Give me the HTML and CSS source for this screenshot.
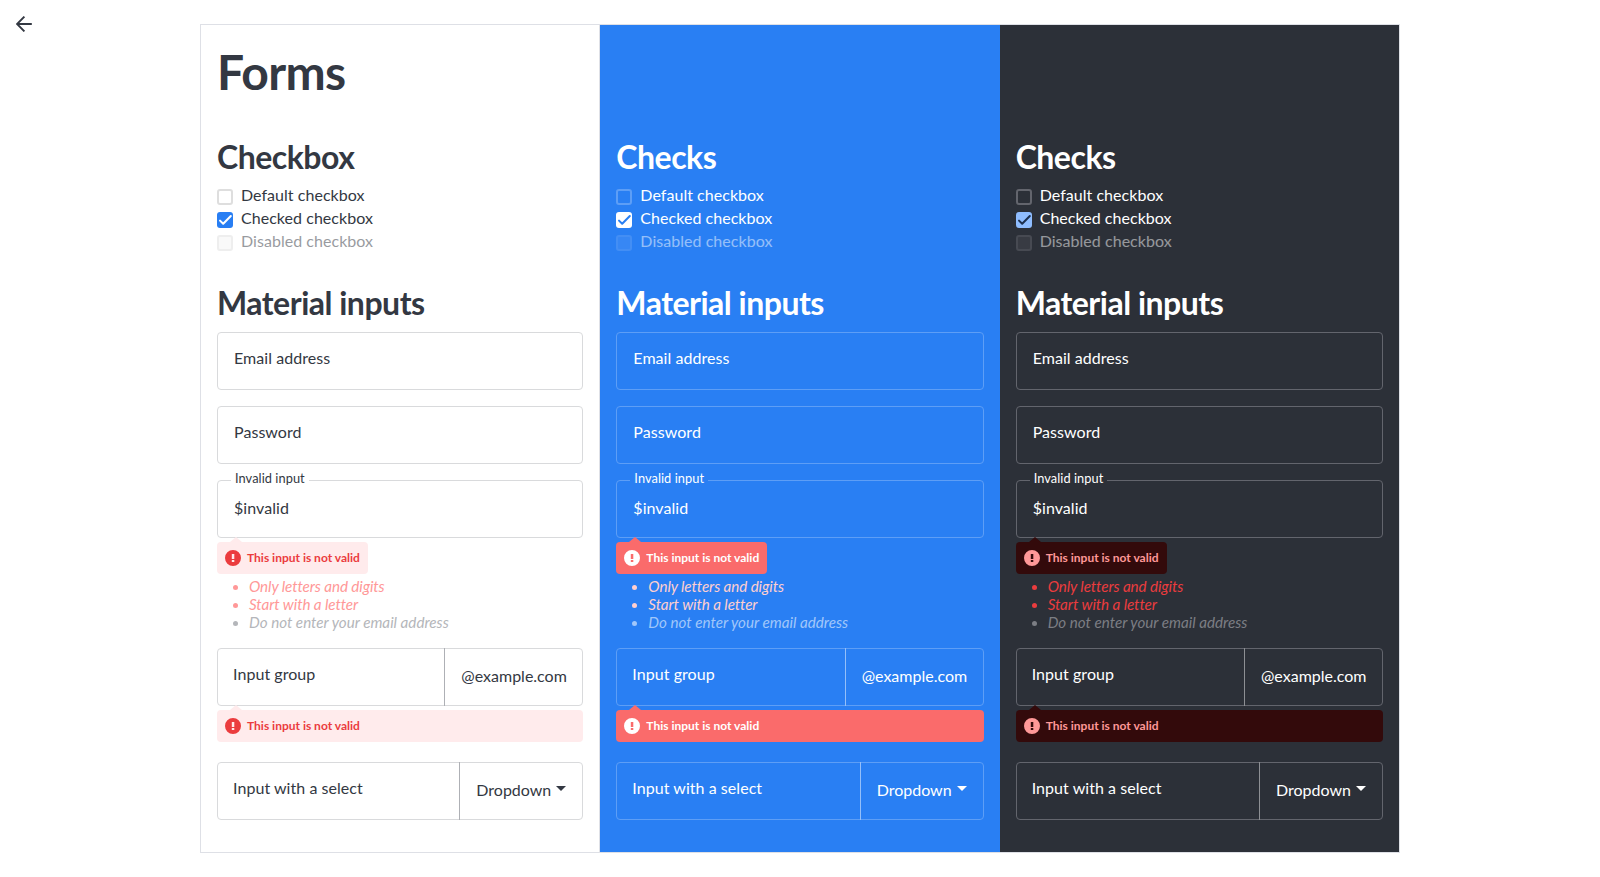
FILE: index.html
```html
<!DOCTYPE html>
<html lang="en">
<head>
<meta charset="utf-8">
<title>Forms</title>
<link rel="stylesheet" href="styles.css">
</head>
<body>
<svg class="defs" width="0" height="0" aria-hidden="true">
  <symbol id="tick" viewBox="0 0 16 16"><path d="M3 8.6 6.2 11.8 13.8 4" fill="none" stroke="currentColor" stroke-width="2" stroke-linecap="round" stroke-linejoin="round"/></symbol>
  <symbol id="alert" viewBox="0 0 16 16"><path fill-rule="evenodd" fill="currentColor" d="M8 0a8 8 0 1 0 0 16A8 8 0 0 0 8 0zM6.8 4h2.5v5H6.8zM6.8 10h2.5v2.1H6.8z"/></symbol>
</svg>
<a class="back" href="#" aria-label="Back">
  <svg width="16" height="16" viewBox="0 0 16 16"><path d="M15.8 8H1.2M8.4.6 1 8l7.4 7.4" fill="none" stroke="currentColor" stroke-width="1.9"/></svg>
</a>
<main class="board">
  <section class="col light">
    <h1>Forms</h1>
    <h2>Checkbox</h2>
    <div class="checks">
      <div class="check"><i class="box"></i><span>Default checkbox</span></div>
      <div class="check"><i class="box on"><svg width="16" height="16"><use href="#tick"/></svg></i><span>Checked checkbox</span></div>
      <div class="check off"><i class="box"></i><span>Disabled checkbox</span></div>
    </div>
    <h2>Material inputs</h2>
    <div class="form">
      <div class="field"><span class="label">Email address</span></div>
      <div class="field"><span class="label">Password</span></div>
      <div class="field filled"><span class="float">Invalid input</span><span class="value">$invalid</span></div>
      <div class="feedback short"><svg width="16" height="16"><use href="#alert"/></svg><span>This input is not valid</span></div>
      <ul class="rules"><li class="bad">Only letters and digits</li><li class="bad">Start with a letter</li><li>Do not enter your email address</li></ul>
      <div class="field group"><span class="label">Input group</span><span class="addon">@example.com</span></div>
      <div class="feedback"><svg width="16" height="16"><use href="#alert"/></svg><span>This input is not valid</span></div>
      <div class="field group"><span class="label">Input with a select</span><span class="addon select">Dropdown<i class="caret"></i></span></div>
    </div>
  </section>
  <section class="col blue">
    <h1></h1>
    <h2>Checks</h2>
    <div class="checks">
      <div class="check"><i class="box"></i><span>Default checkbox</span></div>
      <div class="check"><i class="box on"><svg width="16" height="16"><use href="#tick"/></svg></i><span>Checked checkbox</span></div>
      <div class="check off"><i class="box"></i><span>Disabled checkbox</span></div>
    </div>
    <h2>Material inputs</h2>
    <div class="form">
      <div class="field"><span class="label">Email address</span></div>
      <div class="field"><span class="label">Password</span></div>
      <div class="field filled"><span class="float">Invalid input</span><span class="value">$invalid</span></div>
      <div class="feedback short"><svg width="16" height="16"><use href="#alert"/></svg><span>This input is not valid</span></div>
      <ul class="rules"><li class="bad">Only letters and digits</li><li class="bad">Start with a letter</li><li>Do not enter your email address</li></ul>
      <div class="field group"><span class="label">Input group</span><span class="addon">@example.com</span></div>
      <div class="feedback"><svg width="16" height="16"><use href="#alert"/></svg><span>This input is not valid</span></div>
      <div class="field group"><span class="label">Input with a select</span><span class="addon select">Dropdown<i class="caret"></i></span></div>
    </div>
  </section>
  <section class="col dark">
    <h1></h1>
    <h2>Checks</h2>
    <div class="checks">
      <div class="check"><i class="box"></i><span>Default checkbox</span></div>
      <div class="check"><i class="box on"><svg width="16" height="16"><use href="#tick"/></svg></i><span>Checked checkbox</span></div>
      <div class="check off"><i class="box"></i><span>Disabled checkbox</span></div>
    </div>
    <h2>Material inputs</h2>
    <div class="form">
      <div class="field"><span class="label">Email address</span></div>
      <div class="field"><span class="label">Password</span></div>
      <div class="field filled"><span class="float">Invalid input</span><span class="value">$invalid</span></div>
      <div class="feedback short"><svg width="16" height="16"><use href="#alert"/></svg><span>This input is not valid</span></div>
      <ul class="rules"><li class="bad">Only letters and digits</li><li class="bad">Start with a letter</li><li>Do not enter your email address</li></ul>
      <div class="field group"><span class="label">Input group</span><span class="addon">@example.com</span></div>
      <div class="feedback"><svg width="16" height="16"><use href="#alert"/></svg><span>This input is not valid</span></div>
      <div class="field group"><span class="label">Input with a select</span><span class="addon select">Dropdown<i class="caret"></i></span></div>
    </div>
  </section>
</main>
</body>
</html>
```
FILE: styles.css
```css
* { box-sizing: border-box; }
body { margin: 0; background: #fff; color: #333842; font: 400 16px/24px Lato, sans-serif; }
.defs { position: absolute; }
.back { position: absolute; left: 16px; top: 16px; height: 16px; color: #333842; }
.back svg { display: block; }

.board { display: flex; width: 1200px; height: 829px; margin: 24px auto 0; border: 1px solid #dee0e6; }
.col { flex: 0 0 33.3333%; min-width: 0; padding: 18px 16px 0; background: var(--bg); color: var(--text); }
.light { --bg: #fff; --text: #333842; --line: #d9dadc; --sep: #aeb0b5; --box: #dedede; --on: #287ef3; --tick: #fff;
  --fbg: #ffebec; --fg: #eb3c3e; --bad: #ff9898; --hint: #b4b6ba; --offbg: #f4f4f4; border-right: 1px solid #dee0e6; }
.blue { --bg: #297ff3; --text: #fff; --line: #5d9ef6; --sep: #94bff9; --box: #5d9ef6; --on: #fff; --tick: #297ff3;
  --fbg: #fa6b6b; --fg: #fff; --bad: #ffcfcf; --hint: #a1c7fa; --offbg: #468ff5; }
.dark { --bg: #2c3038; --text: #fff; --line: #63656d; --sep: #8d8f94; --box: #63656d; --on: #8fbdff; --tick: #1c3050;
  --fbg: #330a0b; --fg: #ff9898; --bad: #eb3c3e; --hint: #7c7e84; --offbg: #45474e; }

h1 { height: 58px; margin: 0 0 37px; font-size: 48px; line-height: 58px; font-weight: 700; letter-spacing: -.65px; }
h2 { height: 38px; margin: 0; font-size: 32px; line-height: 38px; font-weight: 700; letter-spacing: -.5px; }

.checks { margin: 8px 0 31px; }
.check { display: flex; gap: 8px; height: 23px; line-height: 21px; letter-spacing: .04px; }
.box { width: 16px; height: 16px; margin-top: 5px; border: 2px solid var(--box); border-radius: 3px; }
.box.on { border: 0; background: var(--on); color: var(--tick); }
.box svg { display: block; }
.off { opacity: .5; }
.off .box { background: var(--offbg); }

.form { margin-top: 10px; }
.field { position: relative; height: 58px; margin-bottom: 16px; padding: 13px 16px; border: 1px solid var(--line); border-radius: 4px; }
.label, .value { display: block; letter-spacing: .05px; }
.filled { margin-bottom: 4px; padding-top: 15px; }
.float { position: absolute; left: 13px; top: -13px; padding: 0 4px; background: var(--bg); font-size: 12.8px; line-height: 20px; letter-spacing: .06px; }
.group { display: flex; justify-content: space-between; margin-bottom: 4px; padding: 0 0 0 15px; }
.group .label { padding-top: 13px; }
.addon { display: flex; align-items: center; width: 138px; margin: -1px 0; padding: 0 0 2px 16px; border-left: 1px solid var(--sep); }
.addon.select { width: 123px; }
.caret { margin: -3px 0 0 5px; border: 5px solid transparent; border-top-color: currentColor; border-bottom: 0; }

.feedback { position: relative; display: flex; align-items: center; gap: 6px; height: 32px; margin-bottom: 20px; padding-left: 8px; border-radius: 4px; background: var(--fbg); color: var(--fg); font-size: 12px; font-weight: 700; }
.feedback::before { content: ""; position: absolute; left: 13px; top: -5px; border: 6px solid transparent; border-top: 0; border-bottom: 5px solid var(--fbg); }
.feedback.short { width: 151px; margin-bottom: 3px; }

.rules { height: 54px; margin: 0 0 17px; padding-left: 32px; color: var(--hint); font-size: 15.2px; line-height: 18px; font-style: italic; }
.rules .bad { color: var(--bad); letter-spacing: -.09px; }
.rules li::marker { font-size: 14px; }
```
